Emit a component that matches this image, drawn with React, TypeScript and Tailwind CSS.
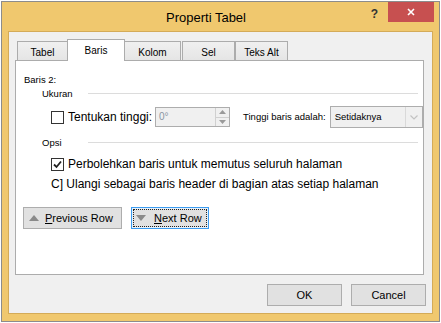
const sans = "font-['Liberation_Sans',Arial,sans-serif]";

function Tab({ label, width, selected, className = '' }: { label: string; width: string; selected?: boolean; className?: string }) {
  if (selected) {
    return (
      <div
        className={`${width} ${className} relative z-10 -mb-px flex h-[22px] items-center justify-center border border-b-0 border-[#acacac] bg-white pt-[1px] text-[10px] leading-[12px]`}
      >
        {label}
      </div>
    );
  }
  return (
    <div
      className={`${width} ${className} flex h-[19px] items-center justify-center border border-b-0 border-[#acacac] bg-gradient-to-b from-[#f0f0f0] to-[#e5e5e5] pt-[3px] text-[10px] leading-[12px]`}
    >
      {label}
    </div>
  );
}

function Checkbox({ checked }: { checked?: boolean }) {
  return (
    <span className="flex h-[13px] w-[13px] shrink-0 items-center justify-center border border-[#333333] bg-white">
      {checked && (
        <svg width="9" height="9" viewBox="0 0 9 9">
          <path d="M1 4.5 L3.5 7 L8 1.5" fill="none" stroke="#222" strokeWidth="1.8" />
        </svg>
      )}
    </span>
  );
}

function SectionLabel({ label }: { label: string }) {
  return (
    <div className="flex h-[12px] items-center pl-[26px] pr-[5px]">
      <span className="w-[46px] text-[9.5px] leading-[12px]">{label}</span>
      <span className="mt-[-2px] h-px flex-1 bg-[#dcdcdc]" />
    </div>
  );
}

export default function App() {
  return (
    <div className={`h-[323px] w-[441px] bg-white p-px text-black ${sans}`}>
      <div className="flex h-[321px] w-[439px] flex-col border border-[#8c8c8c] bg-[#f0c86e]">
        {/* title bar */}
        <div className="flex h-[29px] items-start">
          <span className="ml-[164px] mt-[8px] text-[13px] leading-[16px]">Properti Tabel</span>
          <span className="ml-auto mr-[10px] mt-[5px] text-[12px] font-bold leading-[14px] text-[#333]">?</span>
          <div className="mr-[5px] flex h-[20px] w-[46px] items-center justify-center bg-[#c75050]">
            <svg width="8" height="8" viewBox="0 0 8 8">
              <path d="M1 1 L7 7 M7 1 L1 7" stroke="#fff" strokeWidth="1.6" />
            </svg>
          </div>
        </div>

        {/* client area */}
        <div className="mx-[6px] mb-[7px] flex flex-1 flex-col border border-[#d4ab58] bg-[#f0f0f0]">
          <div className="ml-[6px] mr-[8px] mt-[7px] flex flex-col">
            {/* tabs */}
            <div className="flex items-end pl-[2px]">
              <Tab label="Tabel" width="w-[51px]" />
              <Tab label="Baris" width="w-[58px]" selected className="-ml-px" />
              <Tab label="Kolom" width="w-[57px]" className="-ml-px" />
              <Tab label="Sel" width="w-[53px]" className="ml-px" />
              <Tab label="Teks Alt" width="w-[53px]" />
            </div>

            {/* panel */}
            <div className="flex h-[215px] flex-col border border-[#acacac] bg-white">
              <div className="mt-[13px] pl-[8px] text-[9.5px] leading-[12px]">Baris 2:</div>

              <div className="mt-[2px]">
                <SectionLabel label="Ukuran" />
              </div>

              <div className="mt-[6px] flex h-[22px] items-center pl-[35px]">
                <Checkbox />
                <span className="ml-[4px] text-[12px] leading-[14px]">Tentukan tinggi:</span>
                <div className="ml-[3px] flex h-[20px] w-[75px] border border-[#adadad] bg-[#f0f0f0]">
                  <span className="flex-1 pl-[3px] text-[10px] leading-[18px] text-[#8a96a3]">0°</span>
                  <div className="flex w-[14px] flex-col border-l border-[#d0d0d0]">
                    <div className="flex flex-1 items-center justify-center border-b border-[#d0d0d0]">
                      <svg width="7" height="4" viewBox="0 0 7 4">
                        <path d="M0 4 L3.5 0 L7 4 Z" fill="#9a9a9a" />
                      </svg>
                    </div>
                    <div className="flex flex-1 items-center justify-center">
                      <svg width="7" height="4" viewBox="0 0 7 4">
                        <path d="M0 0 L3.5 4 L7 0 Z" fill="#9a9a9a" />
                      </svg>
                    </div>
                  </div>
                </div>
                <span className="ml-[13px] text-[9.5px] leading-[12px]">Tinggi baris adalah:</span>
                <div className="ml-[4px] flex h-[22px] w-[93px] items-center border border-[#adadad] bg-[#f0f0f0]">
                  <span className="flex-1 pl-[4px] text-[9.5px] leading-[12px]">Setidaknya</span>
                  <div className="flex h-full w-[17px] items-center justify-center border-l border-[#d9d9d9]">
                    <svg width="8" height="5" viewBox="0 0 8 5">
                      <path d="M0.5 0.5 L4 4 L7.5 0.5" fill="none" stroke="#c2c2c2" strokeWidth="1.2" />
                    </svg>
                  </div>
                </div>
              </div>

              <div className="mt-[9px]">
                <SectionLabel label="Opsi" />
              </div>

              <div className="mt-[8px] flex h-[14px] items-center pl-[35px]">
                <Checkbox checked />
                <span className="ml-[4px] text-[12px] leading-[14px]">Perbolehkan baris untuk memutus seluruh halaman</span>
              </div>

              <div className="mt-[6px] flex h-[14px] items-center pl-[35px]">
                <span className="text-[12px] leading-[14px]">C] Ulangi sebagai baris header di bagian atas setiap halaman</span>
              </div>

              <div className="mt-[16px] flex items-center gap-[9px] pl-[7px]">
                <div className="flex h-[22px] w-[99px] items-center border border-[#adadad] bg-[#e1e1e1] pl-[5px]">
                  <svg width="10" height="6" viewBox="0 0 10 6">
                    <path d="M0 6 L5 0 L10 6 Z" fill="#8a8a8a" />
                  </svg>
                  <span className="ml-[6px] text-[11px] leading-[14px]">
                    <span className="underline">P</span>revious Row
                  </span>
                </div>
                <div className="flex h-[22px] w-[78px] items-center border border-[#3c9cf0] bg-[#e5f1fb] p-[1px]">
                  <div className="flex h-full w-full items-center border border-dotted border-[#222] bg-[#e1e1e1] pl-[2px]">
                    <svg width="10" height="6" viewBox="0 0 10 6">
                      <path d="M0 0 L5 6 L10 0 Z" fill="#8a8a8a" />
                    </svg>
                    <span className="ml-[8px] text-[11px] leading-[14px]">
                      <span className="underline">N</span>ext Row
                    </span>
                  </div>
                </div>
              </div>
            </div>
          </div>

          {/* dialog buttons */}
          <div className="mr-[6px] mt-[9px] flex justify-end gap-[9px]">
            <div className="flex h-[22px] w-[75px] items-center justify-center border border-[#adadad] bg-[#e1e1e1] text-[11px] leading-[14px]">
              OK
            </div>
            <div className="flex h-[22px] w-[75px] items-center justify-center border border-[#adadad] bg-[#e1e1e1] text-[11px] leading-[14px]">
              Cancel
            </div>
          </div>
        </div>
      </div>
    </div>
  );
}
